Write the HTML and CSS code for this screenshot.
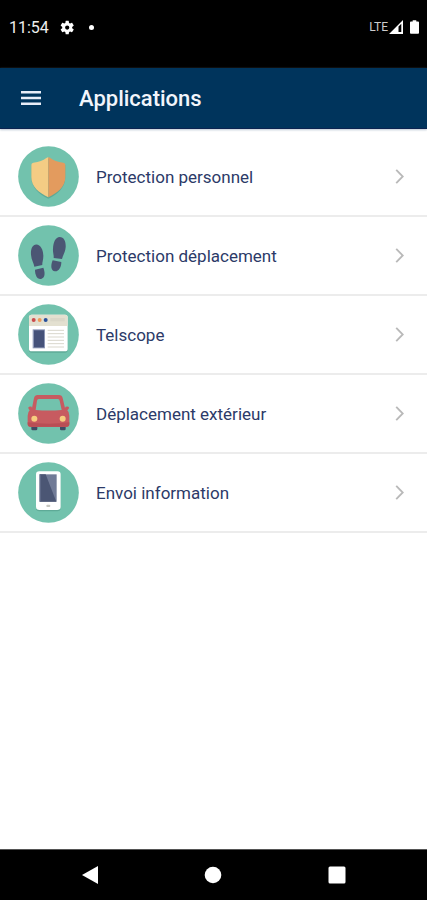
FILE: index.html
```
<!DOCTYPE html>
<html lang="fr">
<head>
<meta charset="utf-8">
<meta name="viewport" content="width=device-width, initial-scale=1">
<title>Applications</title>
<link rel="stylesheet" href="styles.css">
</head>
<body>
<div class="status">
  <span class="clock">11:54</span>
  <svg class="gear" viewBox="0 0 24 24" aria-hidden="true"><path fill-rule="evenodd" d="M19.4 13a7.500 7.500 0 0 0 0-2l2.300-1.800c.2-.2.3-.5.1-.7l-2.200-3.800c-.1-.3-.4-.3-.7-.2l-2.700 1.100a8 8 0 0 0-1.800-1L14 1.700a.5.5 0 0 0-.5-.4h-4a.5.5 0 0 0-.5.4l-.4 2.900a8 8 0 0 0-1.800 1L4.100 4.500c-.3-.1-.6 0-.7.2L1.200 8.500c-.1.2-.1.5.1.7L3.600 11a7.500 7.500 0 0 0 0 2l-2.300 1.800c-.2.2-.2.5-.1.7l2.200 3.800c.1.2.4.300.7.2l2.700-1.100a8 8 0 0 0 1.800 1l.4 2.900c0 .2.200.4.500.4h4c.3 0 .5-.2.5-.4l.4-2.900a8 8 0 0 0 1.800-1l2.700 1.100c.3.1.6 0 .7-.2l2.200-3.800c.1-.2.1-.5-.1-.7zM11.500 15.400a3.400 3.400 0 1 1 0-6.800 3.400 3.400 0 0 1 0 6.800z"/></svg>
  <span class="dot"></span>
  <span class="network">LTE</span>
  <svg class="signal" viewBox="0 0 14 14" aria-hidden="true"><path fill-rule="evenodd" d="M14 0v14H0zM9.500 6.500V12h2.800V3.700z"/></svg>
  <svg class="battery" viewBox="0 0 10 15" aria-hidden="true"><path d="M3 0h4v1.500h2q1 0 1 1V14q0 1-1 1H1q-1 0-1-1V2.500q0-1 1-1h2z"/></svg>
</div>
<header class="bar">
  <button class="menu" type="button" aria-label="Menu"><svg viewBox="0 0 20 14"><path d="M0 0h20v2.500H0zM0 5.700h20v2.600H0zM0 11.500h20V14H0z"/></svg></button>
  <h1>Applications</h1>
</header>
<main>
  <ul class="apps">
    <li><a href="#personnel">
      <svg class="icon" viewBox="24 19 183 183" aria-hidden="true">
        <circle cx="115.500" cy="110.500" r="91" fill="#72c2ad"/>
        <path fill="#5eaa97" d="M64 76Q94 71 115 57q22 14 51 19v38c0 28-23 50-51 63-28-13-51-35-51-63z"/>
        <path fill="#f4cc84" d="M115 53v120c-28-13-51-32-51-60V76q0-6 6-7 26-3 38-13 4-3 7-3z"/>
        <path fill="#e39b5e" d="M115 53q4 0 7 3 12 10 38 13 6 1 6 7v37c0 28-23 47-51 60z"/>
      </svg>
      <span class="label">Protection personnel</span>
      <svg class="chevron" viewBox="0 0 9 16" aria-hidden="true"><path d="M1 1l7 7-7 7"/></svg>
    </a></li>
    <li><a href="#deplacement">
      <svg class="icon" viewBox="24 27 183 183" aria-hidden="true">
        <circle cx="115.500" cy="118.500" r="91" fill="#72c2ad"/>
        <g fill="#4b5674">
          <path d="M76 86c14-3 24 14 24 34 0 12-4 21-3 27l-24 5c-1-10-9-20-10-36-1-15 3-28 13-30z"/>
          <path d="M75 161l25-6c6 15 5 29-5 33-13 4-20-10-20-27z"/>
          <path d="M149 63c14 0 19 15 18 31-1 15-9 25-11 35l-25-3c1-9-3-17-2-28 1-20 8-35 20-35z"/>
          <path d="M128 133l26 5c0 16-8 29-19 28-12-1-14-17-7-33z"/>
        </g>
      </svg>
      <span class="label">Protection déplacement</span>
      <svg class="chevron" viewBox="0 0 9 16" aria-hidden="true"><path d="M1 1l7 7-7 7"/></svg>
    </a></li>
    <li><a href="#telscope">
      <svg class="icon" viewBox="24 27 183 183" aria-hidden="true">
        <circle cx="115.500" cy="118.500" r="91" fill="#72c2ad"/>
        <rect x="57" y="63" width="116" height="110" rx="8" fill="#5eaa97"/>
        <rect x="57" y="59" width="116" height="110" rx="8" fill="#fff"/>
        <path fill="#e3e0d0" d="M57 93V67q0-8 8-8h100q8 0 8 8v26z"/>
        <circle cx="71" cy="75" r="6" fill="#cc4b4c"/><circle cx="89" cy="75" r="6" fill="#ed9b5b"/><circle cx="107" cy="75" r="6" fill="#27509b"/>
        <path fill="#c9c7ba" d="M121 69h43v10h-43z" opacity=".35"/>
        <path fill="#8c96b5" d="M68 103h37v57H68z"/><path fill="#46527a" d="M72 106h30v51H72z"/>
        <path stroke="#d9d7cc" stroke-width="3" d="M113 106h49M113 116h49M113 126h49M113 136h49M113 146h49M113 156h49"/>
      </svg>
      <span class="label">Telscope</span>
      <svg class="chevron" viewBox="0 0 9 16" aria-hidden="true"><path d="M1 1l7 7-7 7"/></svg>
    </a></li>
    <li><a href="#exterieur">
      <svg class="icon" viewBox="24 27 183 183" aria-hidden="true">
        <circle cx="115.500" cy="118.500" r="91" fill="#72c2ad"/>
        <path fill="#3f4b63" d="M64 148h18v17q0 4-4 4H68q-4 0-4-4zM150 148h17v17q0 4-4 4h-9q-4 0-4-4z"/>
        <path fill="#c75b60" fill-rule="evenodd" d="M66 102l6-30q2-9 11-9h64q9 0 11 9l7 30 2-4q8-2 10 2 1 5-5 9 6 5 6 16v25q0 9-9 9H62q-9 0-9-9v-25q0-11 6-16-5-4-4-9 3-4 10-2zM86 75q-4 0-5 5l-4 28q38 3 78 0l-6-28q-1-5-5-5z"/>
        <path fill="#b94e55" d="M53 145q62 8 125 0v4q0 9-9 9H62q-9 0-9-9z"/>
        <circle cx="73" cy="134" r="9" fill="#f7cc7f"/><circle cx="158" cy="134" r="9" fill="#f7cc7f"/>
      </svg>
      <span class="label">Déplacement extérieur</span>
      <svg class="chevron" viewBox="0 0 9 16" aria-hidden="true"><path d="M1 1l7 7-7 7"/></svg>
    </a></li>
    <li><a href="#envoi">
      <svg class="icon" viewBox="24 27 183 183" aria-hidden="true">
        <circle cx="115.500" cy="118.500" r="91" fill="#72c2ad"/>
        <rect x="78" y="59" width="74" height="116" rx="10" fill="#5eaa97"/>
        <rect x="78" y="55" width="74" height="116" rx="10" fill="#fff"/>
        <path fill="#717b97" d="M89 64h51v82H89z"/><path fill="#4b5674" d="M89 64h18l32 82H89z"/>
        <path fill="#66708e" d="M89 64h3v82h-3z"/>
        <rect x="109" y="155" width="12" height="7" rx="3" fill="#c6c6c0"/>
      </svg>
      <span class="label">Envoi information</span>
      <svg class="chevron" viewBox="0 0 9 16" aria-hidden="true"><path d="M1 1l7 7-7 7"/></svg>
    </a></li>
  </ul>
</main>
<nav class="system">
  <button type="button" aria-label="Retour"><svg viewBox="0 0 18 18"><path d="M17 0v18L1 9z"/></svg></button>
  <button type="button" aria-label="Accueil"><svg viewBox="0 0 18 18"><circle cx="9" cy="9" r="8.300"/></svg></button>
  <button type="button" aria-label="Récents"><svg viewBox="0 0 18 18"><rect x=".5" y=".5" width="17" height="17" rx="1.500"/></svg></button>
</nav>
</body>
</html>
```
FILE: styles.css
```
* {
  box-sizing: border-box;
}

body {
  margin: 0;
  min-height: 100vh;
  display: flex;
  flex-direction: column;
  background: #fff;
  font-family: Roboto, sans-serif;
}

svg {
  display: block;
  flex: none;
}

button {
  border: 0;
  padding: 0;
  background: none;
  display: grid;
  place-items: center;
}

.status {
  display: flex;
  align-items: center;
  height: 68px;
  padding: 0 8px 14px 9px;
  background: #000;
  color: #eee;
  fill: #fff;
}

.clock {
  font-size: 16px;
}

.gear {
  width: 15px;
  height: 15px;
  margin-left: 11px;
}

.dot {
  width: 5px;
  height: 5px;
  margin-left: 14px;
  border-radius: 50%;
  background: #fff;
}

.network {
  margin-left: auto;
  color: #ccc;
  font-size: 12px;
}

.signal {
  width: 14px;
  height: 14px;
  margin-left: 1px;
}

.battery {
  width: 9px;
  height: 14px;
  margin-left: 7px;
}

.bar {
  display: flex;
  align-items: center;
  gap: 38px;
  height: 61px;
  padding: 0 21px;
  background: #00345c;
  color: #f2f5fb;
  border-bottom: 1px solid #0b2350;
  box-shadow: 0 1px 2px #bcc6d2;
}

.menu {
  width: 20px;
  height: 40px;
}

.menu svg {
  width: 20px;
  height: 14px;
  fill: #e8edf8;
}

h1 {
  margin: 0;
  font-size: 22px;
  font-weight: 500;
}

main {
  flex: 1;
}

.apps {
  list-style: none;
  margin: 0;
  padding: 9px 0 0;
}

.apps a {
  display: flex;
  align-items: center;
  height: 79px;
  padding: 0 23px 0 18px;
  border-bottom: 2px solid #ececec;
  color: #2c3a68;
  font-size: 17px;
  text-decoration: none;
}

.icon {
  width: 61px;
  height: 61px;
}

.label {
  flex: 1;
  margin-left: 17px;
}

.chevron {
  width: 9px;
  height: 15px;
  fill: none;
  stroke: #b9b9b9;
  stroke-width: 2;
}

.system {
  display: grid;
  grid-template-columns: repeat(3, 1fr);
  height: 51px;
  padding: 0 28px;
  background: #000;
  border-top: 1px solid #555;
}

.system svg {
  width: 18px;
  height: 18px;
  fill: #fff;
}
```
